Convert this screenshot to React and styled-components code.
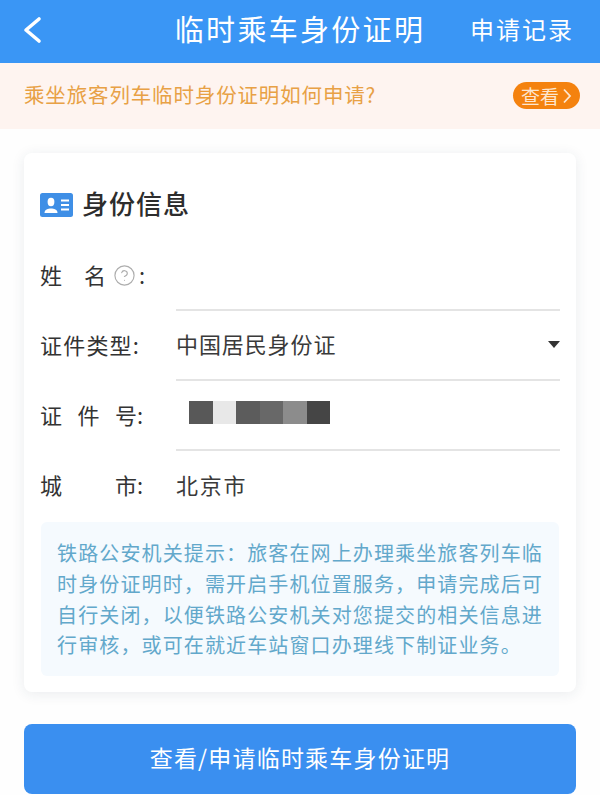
import React from "react";
import styled, { createGlobalStyle } from "styled-components";
import { CircleHelp } from "lucide-react";

const GlobalStyle = createGlobalStyle`
  html, body {
    margin: 0;
    padding: 0;
    background: #fefefe;
  }
  * {
    box-sizing: border-box;
  }
  body {
    font-family: "Noto Sans CJK SC", "Liberation Sans", sans-serif;
  }
`;

const Page = styled.div`
  width: 600px;
  height: 795px;
  overflow: hidden;
`;

const Header = styled.header`
  height: 63px;
  background: #3a96f5;
  color: #fff;
  display: grid;
  grid-template-columns: 1fr auto 1fr;
  align-items: center;
  padding: 0 26px 7px;
`;

const BackIcon = styled.svg`
  width: 20px;
  height: 30px;
  display: block;
  margin-left: -4px;
  margin-top: 3px;
`;

const Title = styled.h1`
  margin: 0;
  font-size: 29px;
  font-weight: 400;
  letter-spacing: 2.3px;
  white-space: nowrap;
`;

const Records = styled.a`
  justify-self: end;
  font-size: 24px;
  letter-spacing: 2px;
  white-space: nowrap;
`;

const Notice = styled.div`
  height: 66px;
  background: #fef4f0;
  display: flex;
  align-items: center;
  justify-content: space-between;
  padding: 0 20px 0 24px;
  color: #e8a145;
  font-size: 20.5px;
  letter-spacing: 0.85px;
`;

const NoticeText = styled.span`
  margin-bottom: 4px;
`;

const Tag = styled.span`
  width: 67px;
  height: 27px;
  border-radius: 14px;
  background: #f4820f;
  color: #fde6cf;
  display: flex;
  align-items: center;
  justify-content: center;
  gap: 3px;
  font-size: 19px;
  letter-spacing: 0;
  margin-top: -1px;
`;

const TagArrow = styled.svg`
  width: 10px;
  height: 18px;
`;

const Main = styled.main`
  padding: 24px 24px 0;
`;

const Card = styled.section`
  height: 539px;
  border-radius: 8px;
  background: #fff;
  box-shadow: 0 2px 14px rgba(30, 50, 80, 0.09);
  padding: 40px 16px 0;
`;

const SectionHead = styled.div`
  display: flex;
  align-items: center;
  gap: 9px;
  height: 24px;
  color: #2d2d2d;
`;

const HeadText = styled.span`
  font-size: 26px;
  font-weight: 500;
  letter-spacing: 1px;
  margin-top: -5px;
`;

const IdIcon = styled.svg`
  width: 33px;
  height: 24px;
`;

const Rows = styled.div`
  margin-top: 24px;
`;

const Row = styled.div`
  display: flex;
  height: 70px;
`;

const Label = styled.div`
  width: 136px;
  flex: none;
  display: flex;
  align-items: center;
  padding-bottom: 4px;
  font-size: 22px;
  color: #333;
`;

const LabelChars = styled.span`
  width: ${(p) => p.$width}px;
  display: flex;
  justify-content: space-between;
  letter-spacing: ${(p) => p.$spacing || 0}px;
`;

const Help = styled(CircleHelp)`
  margin: 2px 3px 0 7px;
  flex: none;
  color: #adadad;
`;

const Field = styled.div`
  flex: 1;
  display: flex;
  align-items: center;
  justify-content: space-between;
  font-size: 22px;
  color: #3a3a3a;
  border-bottom: ${(p) => (p.$plain ? "none" : "2px solid #e4e4e4")};
  padding-bottom: 4px;
  letter-spacing: ${(p) => (p.$plain ? 1.8 : 0.9)}px;
`;

const Caret = styled.span`
  width: 0;
  height: 0;
  border-left: 6px solid transparent;
  border-right: 6px solid transparent;
  border-top: 7px solid #333;
  margin-top: 2px;
`;

const Mosaic = styled.div`
  display: flex;
  margin-left: 13px;
  margin-top: -2px;
`;

const Block = styled.span`
  width: 23.5px;
  height: 23px;
  background: ${(p) => p.$color};
`;

const Tip = styled.div`
  height: 154px;
  margin: 1px 1px 0;
  padding: 16px 0 0 16px;
  background: #f5fafe;
  border-radius: 6px;
  color: #62a8cb;
  font-size: 20px;
  line-height: 30.8px;
  letter-spacing: 1.13px;
`;

const TipLine = styled.div`
  white-space: nowrap;
`;

const Submit = styled.button`
  display: block;
  width: 100%;
  height: 70px;
  margin-top: 32px;
  padding: 0 0 4px;
  border: none;
  border-radius: 8px;
  background: #3a8ff0;
  color: #fff;
  font-family: inherit;
  font-size: 23px;
  letter-spacing: 1.2px;
`;

const mosaic = ["#585858", "#e8e8e8", "#5c5c5c", "#686868", "#8c8c8c", "#454545"];

const tips = [
  "铁路公安机关提示\uFF1A旅客在网上办理乘坐旅客列车临",
  "时身份证明时\uFF0C需开启手机位置服务\uFF0C申请完成后可",
  "自行关闭\uFF0C以便铁路公安机关对您提交的相关信息进",
  "行审核\uFF0C或可在就近车站窗口办理线下制证业务。",
];

const App = () => {
  return (
    <Page>
      <GlobalStyle />
      <Header>
        <BackIcon viewBox="0 0 20 30">
          <path d="M17 4 L4 15 L17 26" fill="none" stroke="#fff" strokeWidth="3.6" strokeLinecap="round" strokeLinejoin="round" />
        </BackIcon>
        <Title>临时乘车身份证明</Title>
        <Records>申请记录</Records>
      </Header>
      <Notice>
        <NoticeText>乘坐旅客列车临时身份证明如何申请?</NoticeText>
        <Tag>
          查看
          <TagArrow viewBox="0 0 10 18">
            <path d="M2 2.5 L8 9 L2 15.5" fill="none" stroke="#fde6cf" strokeWidth="1.8" />
          </TagArrow>
        </Tag>
      </Notice>
      <Main>
        <Card>
          <SectionHead>
            <IdIcon viewBox="0 0 33 24">
              <rect width="33" height="24" rx="2.5" fill="#3f8fe6" />
              <ellipse cx="11" cy="9" rx="3.4" ry="4.2" fill="#fff" />
              <path d="M4.5 20 C4.5 16.5 8 15.5 11 15.5 C14 15.5 17.5 16.5 17.5 20 Z" fill="#fff" />
              <path d="M21 7.5 H29 M21 12 H29 M21 16.5 H29" stroke="#fff" strokeWidth="1.8" />
            </IdIcon>
            <HeadText>身份信息</HeadText>
          </SectionHead>
          <Rows>
            <Row>
              <Label>
                <LabelChars $width={66}>
                  <span>姓</span>
                  <span>名</span>
                </LabelChars>
                <Help size={23} strokeWidth={1.2} />
                <span>:</span>
              </Label>
              <Field />
            </Row>
            <Row>
              <Label>
                <LabelChars $width={105} $spacing={1.2}>证件类型:</LabelChars>
              </Label>
              <Field>
                中国居民身份证
                <Caret />
              </Field>
            </Row>
            <Row>
              <Label>
                <LabelChars $width={97}>
                  <span>证</span>
                  <span>件</span>
                  <span>号</span>
                </LabelChars>
                <span>:</span>
              </Label>
              <Field>
                <Mosaic>
                  {mosaic.map((color, i) => (
                    <Block key={i} $color={color} />
                  ))}
                </Mosaic>
              </Field>
            </Row>
            <Row>
              <Label>
                <LabelChars $width={97}>
                  <span>城</span>
                  <span>市</span>
                </LabelChars>
                <span>:</span>
              </Label>
              <Field $plain>北京市</Field>
            </Row>
          </Rows>
          <Tip>
            {tips.map((line) => (
              <TipLine key={line}>{line}</TipLine>
            ))}
          </Tip>
        </Card>
        <Submit>查看/申请临时乘车身份证明</Submit>
      </Main>
    </Page>
  );
};

export default App;
